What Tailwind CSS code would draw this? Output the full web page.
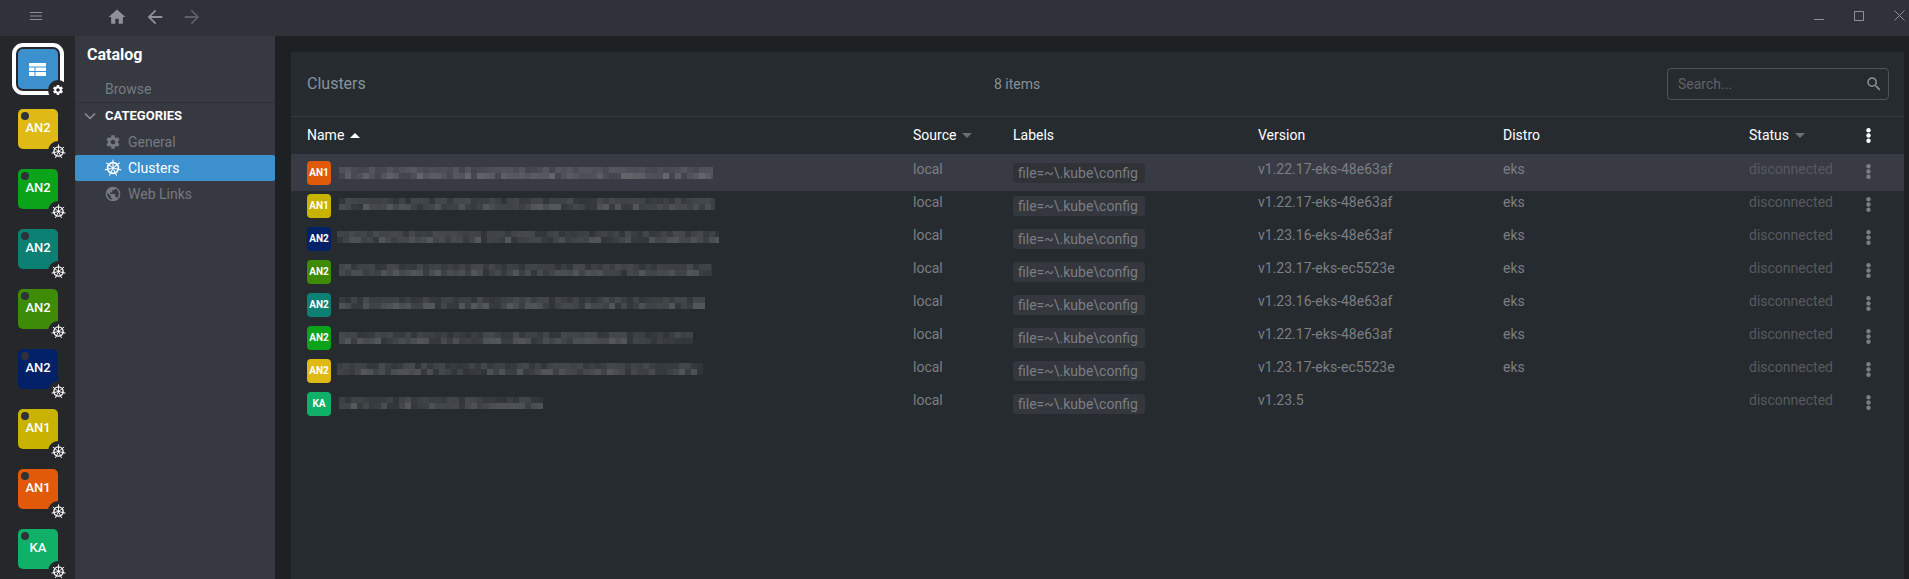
<!DOCTYPE html>
<html lang="en">
<head>
<meta charset="UTF-8">
<title>Catalog - Clusters</title>
<script src="https://cdn.jsdelivr.net/npm/@tailwindcss/browser@4"></script>
</head>
<body class="h-[579px] w-[1909px] overflow-hidden bg-[#1e2124] font-['Roboto',sans-serif] text-[14px]">
<svg class="hidden">
  <symbol id="wheel" viewBox="0 0 24 24">
    <g fill="none" stroke="currentColor">
      <circle cx="12" cy="12" r="7.400" stroke-width="2.200"/>
      <circle cx="12" cy="12" r="2.300" fill="currentColor" stroke="none"/>
      <path stroke-width="1.500" d="M12 .5v9M21 4.800l-7 5.600M23.200 14.600l-8.700-2M17 22.400l-3.900-8M7 22.400l3.900-8M.8 14.600l8.700-2M3 4.800l7 5.600"/>
    </g>
  </symbol>
  <symbol id="gear" viewBox="0 0 24 24">
    <path fill="currentColor" d="M19.430 12.980c.04-.32.07-.64.07-.98s-.03-.66-.07-.98l2.110-1.650c.19-.15.240-.42.120-.64l-2-3.460c-.12-.22-.39-.3-.61-.22l-2.490 1c-.52-.4-1.080-.73-1.690-.98l-.38-2.650C14.460 2.180 14.250 2 14 2h-4c-.25 0-.46.18-.49.42l-.38 2.650c-.61.25-1.170.59-1.690.98l-2.490-1c-.23-.09-.49 0-.61.22l-2 3.460c-.13.220-.07.49.12.640l2.110 1.650c-.04.320-.07.650-.07.980s.03.660.07.980l-2.110 1.650c-.19.150-.24.420-.12.640l2 3.460c.12.220.39.300.61.220l2.490-1c.52.400 1.080.730 1.690.980l.38 2.650c.03.240.24.420.49.420h4c.25 0 .46-.18.49-.42l.38-2.650c.61-.25 1.170-.59 1.690-.98l2.490 1c.23.090.49 0 .61-.22l2-3.460c.12-.22.07-.49-.12-.64l-2.110-1.650zM12 15.500c-1.930 0-3.500-1.570-3.500-3.500s1.570-3.500 3.500-3.500 3.500 1.570 3.500 3.500-1.570 3.500-3.500 3.500z"/>
  </symbol>
  <symbol id="dots" viewBox="0 0 5 15">
    <circle cx="2.500" cy="2.200" r="2.200" fill="currentColor"/><circle cx="2.500" cy="7.500" r="2.200" fill="currentColor"/><circle cx="2.500" cy="12.800" r="2.200" fill="currentColor"/>
  </symbol>
</svg>

<!-- top bar -->
<header class="flex h-9 items-center bg-[#2f3238]">
  <div class="-mt-[5px] flex w-[75px] justify-start pl-[30px]">
    <svg class="h-2 w-3" viewBox="0 0 12 8" fill="none" stroke="#8e9297"><path d="M0 .5h12M0 4h12M0 7.500h12"/></svg>
  </div>
  <svg class="-mt-[2px] ml-[32px] h-[20px] w-[20px]" viewBox="0 0 24 24" fill="#8e9297"><path d="M10 20v-6h4v6h5v-8h3L12 3 2 12h3v8z"/></svg>
  <svg class="-mt-[2px] ml-[17px] h-[22px] w-[22px]" viewBox="0 0 24 24" fill="#8e9297"><path d="M20 11H7.830l5.590-5.590L12 4l-8 8 8 8 1.410-1.410L7.830 13H20v-2z"/></svg>
  <svg class="-mt-[2px] ml-[15px] h-[22px] w-[22px]" viewBox="0 0 24 24" fill="#5c6066"><path d="M4 11h12.170l-5.590-5.590L12 4l8 8-8 8-1.410-1.410L16.170 13H4v-2z"/></svg>
  <div class="-mt-[5px] ml-auto flex items-center gap-[30px] pr-[4px]">
    <svg class="h-[11px] w-[10px]" viewBox="0 0 10 11" fill="none" stroke="#8e9297"><path d="M0 9.500h10"/></svg>
    <svg class="h-[10px] w-[10px]" viewBox="0 0 10 10" fill="none" stroke="#8e9297"><path d="M.5.500h9v9h-9z"/></svg>
    <svg class="h-[11px] w-[11px]" viewBox="0 0 11 11" fill="none" stroke="#8e9297"><path d="M.5.500l10 10M10.500.500l-10 10"/></svg>
  </div>
</header>

<div class="flex h-[543px]">
  <!-- hotbar -->
  <nav class="flex w-[75px] shrink-0 flex-col gap-5 bg-[#25272b] pl-[18px] pt-[13px]">
    <div class="relative h-10 w-10 rounded-[5px] bg-[#3d90ce] text-white outline-[4px] outline-offset-[2px] outline-white">
      <svg class="absolute left-[11px] top-[14px] h-[13px] w-[17px]" viewBox="0 0 17 13" fill="currentColor"><path d="M0 0h17v3.500H0zM0 4.500h5.500v3.500H0zM6.500 4.500H17v3.500H6.500zM0 9h5.500v4H0zM6.500 9H17v4H6.500z"/></svg>
      <span class="absolute left-[30px] top-[31px] flex h-5 w-5 items-center justify-center rounded-full bg-[#25272b]"><svg class="h-[12px] w-[12px]"><use href="#gear"/></svg></span>
    </div>
    <div class="relative flex h-10 w-10 items-center justify-center rounded-[5px] bg-[#dfba15] pb-[2px] text-[13px] font-medium text-white">AN2
      <span class="absolute left-[3px] top-[3px] h-2 w-2 rounded-full bg-[#2f3238]"></span>
      <span class="absolute left-[30px] top-[32px] flex h-5 w-5 items-center justify-center rounded-full bg-[#25272b]"><svg class="h-[15px] w-[15px]"><use href="#wheel"/></svg></span>
    </div>
    <div class="relative flex h-10 w-10 items-center justify-center rounded-[5px] bg-[#0aa31a] pb-[2px] text-[13px] font-medium text-white">AN2
      <span class="absolute left-[3px] top-[3px] h-2 w-2 rounded-full bg-[#2f3238]"></span>
      <span class="absolute left-[30px] top-[32px] flex h-5 w-5 items-center justify-center rounded-full bg-[#25272b]"><svg class="h-[15px] w-[15px]"><use href="#wheel"/></svg></span>
    </div>
    <div class="relative flex h-10 w-10 items-center justify-center rounded-[5px] bg-[#0d8074] pb-[2px] text-[13px] font-medium text-white">AN2
      <span class="absolute left-[3px] top-[3px] h-2 w-2 rounded-full bg-[#2f3238]"></span>
      <span class="absolute left-[30px] top-[32px] flex h-5 w-5 items-center justify-center rounded-full bg-[#25272b]"><svg class="h-[15px] w-[15px]"><use href="#wheel"/></svg></span>
    </div>
    <div class="relative flex h-10 w-10 items-center justify-center rounded-[5px] bg-[#3d8b06] pb-[2px] text-[13px] font-medium text-white">AN2
      <span class="absolute left-[3px] top-[3px] h-2 w-2 rounded-full bg-[#2f3238]"></span>
      <span class="absolute left-[30px] top-[32px] flex h-5 w-5 items-center justify-center rounded-full bg-[#25272b]"><svg class="h-[15px] w-[15px]"><use href="#wheel"/></svg></span>
    </div>
    <div class="relative flex h-10 w-10 items-center justify-center rounded-[5px] bg-[#022166] pb-[2px] text-[13px] font-medium text-white">AN2
      <span class="absolute left-[3px] top-[3px] h-2 w-2 rounded-full bg-[#2f3238]"></span>
      <span class="absolute left-[30px] top-[32px] flex h-5 w-5 items-center justify-center rounded-full bg-[#25272b]"><svg class="h-[15px] w-[15px]"><use href="#wheel"/></svg></span>
    </div>
    <div class="relative flex h-10 w-10 items-center justify-center rounded-[5px] bg-[#c8b400] pb-[2px] text-[13px] font-medium text-white">AN1
      <span class="absolute left-[3px] top-[3px] h-2 w-2 rounded-full bg-[#2f3238]"></span>
      <span class="absolute left-[30px] top-[32px] flex h-5 w-5 items-center justify-center rounded-full bg-[#25272b]"><svg class="h-[15px] w-[15px]"><use href="#wheel"/></svg></span>
    </div>
    <div class="relative flex h-10 w-10 items-center justify-center rounded-[5px] bg-[#e05a0a] pb-[2px] text-[13px] font-medium text-white">AN1
      <span class="absolute left-[3px] top-[3px] h-2 w-2 rounded-full bg-[#2f3238]"></span>
      <span class="absolute left-[30px] top-[32px] flex h-5 w-5 items-center justify-center rounded-full bg-[#25272b]"><svg class="h-[15px] w-[15px]"><use href="#wheel"/></svg></span>
    </div>
    <div class="relative flex h-10 w-10 shrink-0 items-center justify-center rounded-[5px] bg-[#10b068] pb-[2px] text-[13px] font-medium text-white">KA
      <span class="absolute left-[3px] top-[3px] h-2 w-2 rounded-full bg-[#2f3238]"></span>
      <span class="absolute left-[30px] top-[32px] flex h-5 w-5 items-center justify-center rounded-full bg-[#25272b]"><svg class="h-[15px] w-[15px]"><use href="#wheel"/></svg></span>
    </div>
  </nav>

  <!-- sidebar -->
  <aside class="w-[200px] shrink-0 bg-[#363940] text-[#757a81]">
    <h1 class="pl-[12px] pt-[8px] text-[16px] font-bold leading-[22px] text-white">Catalog</h1>
    <div class="mt-[12px] h-[25px] border-b border-[#2d3036] pl-[30px] leading-[22px]">Browse</div>
    <div class="flex h-[26px] items-center text-[13px] font-bold text-white">
      <svg class="ml-[9px] h-[8px] w-[12px]" viewBox="0 0 12 8" fill="none" stroke="#8e9297" stroke-width="1.500"><path d="M1 1.500l5 5 5-5"/></svg>
      <span class="ml-[9px]">CATEGORIES</span>
    </div>
    <div class="flex h-[26px] items-center pl-[30px]"><svg class="h-4 w-4"><use href="#gear"/></svg><span class="ml-[7px]">General</span></div>
    <div class="flex h-[26px] items-center rounded-[2px] bg-[#3d90ce] pl-[30px] text-white"><svg class="h-4 w-4 scale-110"><use href="#wheel"/></svg><span class="ml-[7px]">Clusters</span></div>
    <div class="flex h-[26px] items-center pl-[30px]">
      <svg class="h-4 w-4 scale-110" viewBox="0 0 24 24" fill="currentColor"><path d="M12 2a10 10 0 1 0 0 20 10 10 0 0 0 0-20zM11 19.930A8 8 0 0 1 4.210 10.210L9 15v1c0 1.100.9 2 2 2v1.930zm6.900-2.540A2 2 0 0 0 16 16h-1v-3c0-.55-.45-1-1-1H8v-2h2c.55 0 1-.45 1-1V7h2c1.100 0 2-.9 2-2v-.410a8 8 0 0 1 2.900 12.800z"/></svg>
      <span class="ml-[7px]">Web Links</span>
    </div>
  </aside>

  <div class="w-4 shrink-0"></div>

  <!-- clusters panel -->
  <main class="mt-4 w-[1613px] shrink-0 bg-[#262b2f]">
    <div class="flex h-[65px] items-center border-b border-[#373a40] pl-4 pr-[15px]">
      <h2 class="w-[687px] text-[16px] text-[#87929e]">Clusters</h2>
      <span class="text-[#87919c]">8 items</span>
      <div class="ml-auto flex h-[32px] w-[222px] items-center justify-between rounded-[4px] border border-[#50545a] pl-[10px] pr-[5px] text-[#5f6369]">
        <span>Search...</span>
        <svg class="h-[18px] w-[18px]" viewBox="0 0 24 24" fill="#8e9297"><path d="M15.500 14h-.790l-.280-.270A6.470 6.470 0 0 0 16 9.500 6.500 6.500 0 1 0 9.500 16c1.610 0 3.090-.590 4.230-1.570l.270.280v.790l5 5 1.490-1.490-4.990-5zm-6 0C7.010 14 5 11.990 5 9.500S7.010 5 9.500 5 14 7.010 14 9.500 11.990 14 9.500 14z"/></svg>
      </div>
    </div>

    <div class="grid h-[37px] grid-cols-[606px_100px_245px_245px_246px_111px_16px] items-center pl-4 text-white">
      <div class="flex items-center">Name<span class="ml-[6px] h-0 w-0 border-x-[5px] border-b-[5px] border-x-transparent border-b-white"></span></div>
      <div class="flex items-center">Source<span class="ml-[6px] h-0 w-0 border-x-[5px] border-t-[5px] border-x-transparent border-t-[#6b6e74]"></span></div>
      <div>Labels</div>
      <div>Version</div>
      <div>Distro</div>
      <div class="flex items-center">Status<span class="ml-[6px] h-0 w-0 border-x-[5px] border-t-[5px] border-x-transparent border-t-[#6b6e74]"></span></div>
      <svg class="mx-auto h-[15px] w-[5px] text-white"><use href="#dots"/></svg>
    </div>

    <!-- first row carries 4px extra on each side of its content, it is the hovered one -->
    <div class="grid h-[37px] grid-cols-[606px_100px_245px_245px_246px_111px_16px] items-start bg-[#383b43] pl-4 pt-1 leading-[22px] text-[#7b7e83]">
      <div class="flex">
        <span class="mt-[3px] flex h-6 w-6 items-center justify-center rounded-[4px] bg-[#e05a0a] text-[10px] font-bold text-white">AN1</span>
        <div class="mosaic ml-2 mt-[9px]" data-w="374" data-seed="11"></div>
      </div>
      <div>local</div>
      <div><span class="mt-[5px] inline-block h-5 rounded-[3px] bg-[#2f3338] pl-[5px] pr-[7px] leading-5">file=~\.kube\config</span></div>
      <div>v1.22.17-eks-48e63af</div>
      <div>eks</div>
      <div class="text-[#565a60]">disconnected</div>
      <svg class="mx-auto mt-[6px] h-[15px] w-[5px] text-[#7b7e83]"><use href="#dots"/></svg>
    </div>
    <div class="grid h-[33px] grid-cols-[606px_100px_245px_245px_246px_111px_16px] items-start pl-4 leading-[22px] text-[#7b7e83]">
      <div class="flex">
        <span class="mt-[3px] flex h-6 w-6 items-center justify-center rounded-[4px] bg-[#c8b400] text-[10px] font-bold text-white">AN1</span>
        <div class="mosaic ml-2 mt-[7px]" data-w="376" data-seed="23"></div>
      </div>
      <div>local</div>
      <div><span class="mt-[5px] inline-block h-5 rounded-[3px] bg-[#34373d] pl-[5px] pr-[7px] leading-5">file=~\.kube\config</span></div>
      <div>v1.22.17-eks-48e63af</div>
      <div>eks</div>
      <div class="text-[#565a60]">disconnected</div>
      <svg class="mx-auto mt-[6px] h-[15px] w-[5px] text-[#7b7e83]"><use href="#dots"/></svg>
    </div>
    <div class="grid h-[33px] grid-cols-[606px_100px_245px_245px_246px_111px_16px] items-start pl-4 leading-[22px] text-[#7b7e83]">
      <div class="flex">
        <span class="mt-[3px] flex h-6 w-6 items-center justify-center rounded-[4px] bg-[#022166] text-[10px] font-bold text-white">AN2</span>
        <div class="mosaic ml-[6px] mt-[7px]" data-w="382" data-seed="37"></div>
      </div>
      <div>local</div>
      <div><span class="mt-[5px] inline-block h-5 rounded-[3px] bg-[#34373d] pl-[5px] pr-[7px] leading-5">file=~\.kube\config</span></div>
      <div>v1.23.16-eks-48e63af</div>
      <div>eks</div>
      <div class="text-[#565a60]">disconnected</div>
      <svg class="mx-auto mt-[6px] h-[15px] w-[5px] text-[#7b7e83]"><use href="#dots"/></svg>
    </div>
    <div class="grid h-[33px] grid-cols-[606px_100px_245px_245px_246px_111px_16px] items-start pl-4 leading-[22px] text-[#7b7e83]">
      <div class="flex">
        <span class="mt-[3px] flex h-6 w-6 items-center justify-center rounded-[4px] bg-[#3d8b06] text-[10px] font-bold text-white">AN2</span>
        <div class="mosaic ml-2 mt-[7px]" data-w="373" data-seed="41"></div>
      </div>
      <div>local</div>
      <div><span class="mt-[5px] inline-block h-5 rounded-[3px] bg-[#34373d] pl-[5px] pr-[7px] leading-5">file=~\.kube\config</span></div>
      <div>v1.23.17-eks-ec5523e</div>
      <div>eks</div>
      <div class="text-[#565a60]">disconnected</div>
      <svg class="mx-auto mt-[6px] h-[15px] w-[5px] text-[#7b7e83]"><use href="#dots"/></svg>
    </div>
    <div class="grid h-[33px] grid-cols-[606px_100px_245px_245px_246px_111px_16px] items-start pl-4 leading-[22px] text-[#7b7e83]">
      <div class="flex">
        <span class="mt-[3px] flex h-6 w-6 items-center justify-center rounded-[4px] bg-[#0d8074] text-[10px] font-bold text-white">AN2</span>
        <div class="mosaic ml-2 mt-[7px]" data-w="366" data-seed="53"></div>
      </div>
      <div>local</div>
      <div><span class="mt-[5px] inline-block h-5 rounded-[3px] bg-[#34373d] pl-[5px] pr-[7px] leading-5">file=~\.kube\config</span></div>
      <div>v1.23.16-eks-48e63af</div>
      <div>eks</div>
      <div class="text-[#565a60]">disconnected</div>
      <svg class="mx-auto mt-[6px] h-[15px] w-[5px] text-[#7b7e83]"><use href="#dots"/></svg>
    </div>
    <div class="grid h-[33px] grid-cols-[606px_100px_245px_245px_246px_111px_16px] items-start pl-4 leading-[22px] text-[#7b7e83]">
      <div class="flex">
        <span class="mt-[3px] flex h-6 w-6 items-center justify-center rounded-[4px] bg-[#0aa31a] text-[10px] font-bold text-white">AN2</span>
        <div class="mosaic ml-2 mt-[9px]" data-w="354" data-seed="67"></div>
      </div>
      <div>local</div>
      <div><span class="mt-[5px] inline-block h-5 rounded-[3px] bg-[#34373d] pl-[5px] pr-[7px] leading-5">file=~\.kube\config</span></div>
      <div>v1.22.17-eks-48e63af</div>
      <div>eks</div>
      <div class="text-[#565a60]">disconnected</div>
      <svg class="mx-auto mt-[6px] h-[15px] w-[5px] text-[#7b7e83]"><use href="#dots"/></svg>
    </div>
    <div class="grid h-[33px] grid-cols-[606px_100px_245px_245px_246px_111px_16px] items-start pl-4 leading-[22px] text-[#7b7e83]">
      <div class="flex">
        <span class="mt-[3px] flex h-6 w-6 items-center justify-center rounded-[4px] bg-[#dfba15] text-[10px] font-bold text-white">AN2</span>
        <div class="mosaic ml-[6px] mt-[7px]" data-w="366" data-seed="79"></div>
      </div>
      <div>local</div>
      <div><span class="mt-[5px] inline-block h-5 rounded-[3px] bg-[#34373d] pl-[5px] pr-[7px] leading-5">file=~\.kube\config</span></div>
      <div>v1.23.17-eks-ec5523e</div>
      <div>eks</div>
      <div class="text-[#565a60]">disconnected</div>
      <svg class="mx-auto mt-[6px] h-[15px] w-[5px] text-[#7b7e83]"><use href="#dots"/></svg>
    </div>
    <div class="grid h-[33px] grid-cols-[606px_100px_245px_245px_246px_111px_16px] items-start pl-4 leading-[22px] text-[#7b7e83]">
      <div class="flex">
        <span class="mt-[3px] flex h-6 w-6 items-center justify-center rounded-[4px] bg-[#10b068] text-[10px] font-bold text-white">KA</span>
        <div class="mosaic ml-2 mt-[8px]" data-w="204" data-seed="83"></div>
      </div>
      <div>local</div>
      <div><span class="mt-[5px] inline-block h-5 rounded-[3px] bg-[#34373d] pl-[5px] pr-[7px] leading-5">file=~\.kube\config</span></div>
      <div>v1.23.5</div>
      <div></div>
      <div class="text-[#565a60]">disconnected</div>
      <svg class="mx-auto mt-[6px] h-[15px] w-[5px] text-[#7b7e83]"><use href="#dots"/></svg>
    </div>
  </main>
</div>

<script>
// the names are pixelated in the screenshot, so draw a mosaic of 6px cells
document.querySelectorAll('.mosaic').forEach(function (el) {
  var w = +el.dataset.w, seed = +el.dataset.seed, out = '';
  for (var y = 0; y < 2; y++) {
    for (var x = 0; x < w; x += 6) {
      seed = (seed * 9301 + 49297) % 233280;
      var a = 0.05 + (seed / 233280) * (y ? 0.17 : 0.1);
      out += '<rect x="' + x + '" y="' + y * 6 + '" width="6" height="6" fill="#fff" fill-opacity="' + a.toFixed(2) + '"/>';
    }
  }
  el.innerHTML = '<svg width="' + w + '" height="12" class="block">' + out + '</svg>';
});
</script>
</body>
</html>
